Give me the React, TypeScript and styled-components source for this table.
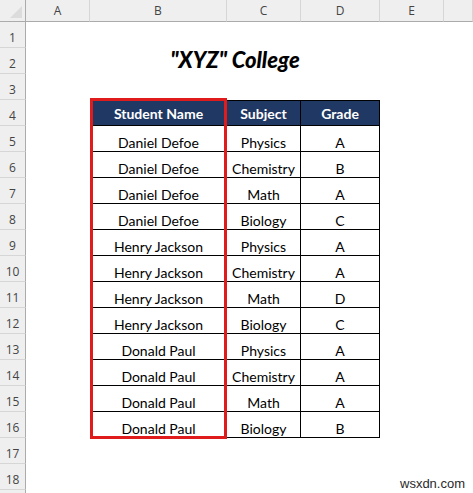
import React from "react";
import styled, { createGlobalStyle } from "styled-components";

const Global = createGlobalStyle`
  html, body { margin: 0; padding: 0; background: #ffffff; overflow: hidden; }
  body { font-family: "Lato", "Open Sans", sans-serif; }
`;

const COLS = ["A", "B", "C", "D", "E", ""];
const ROW_COUNT = 19;

const rows: [string, string, string][] = [
  ["Daniel Defoe", "Physics", "A"],
  ["Daniel Defoe", "Chemistry", "B"],
  ["Daniel Defoe", "Math", "A"],
  ["Daniel Defoe", "Biology", "C"],
  ["Henry Jackson", "Physics", "A"],
  ["Henry Jackson", "Chemistry", "A"],
  ["Henry Jackson", "Math", "D"],
  ["Henry Jackson", "Biology", "C"],
  ["Donald Paul", "Physics", "A"],
  ["Donald Paul", "Chemistry", "A"],
  ["Donald Paul", "Math", "A"],
  ["Donald Paul", "Biology", "B"],
];

const Page = styled.div`
  position: relative;
  width: 473px;
  height: 493px;
  overflow: hidden;
  background: #ffffff;
`;

const Sheet = styled.div`
  display: grid;
  grid-template-columns: 26px 64px 137px 74px 79px 64px 1fr;
  grid-template-rows: 22px repeat(${ROW_COUNT}, 26px);
`;

const Corner = styled.div`
  grid-column: 1;
  grid-row: 1;
  background: #efefef;
  border-right: 1px solid #ababab;
  border-bottom: 1px solid #ababab;
  box-sizing: border-box;
  position: relative;
  &::after {
    content: "";
    position: absolute;
    right: 3px;
    bottom: 3px;
    width: 0;
    height: 0;
    border-left: 12px solid transparent;
    border-bottom: 12px solid #dcdcdc;
  }
`;

const ColHead = styled.div<{ $col: number }>`
  grid-column: ${(p) => p.$col};
  grid-row: 1;
  background: #efefef;
  border-bottom: 1px solid #ababab;
  border-right: 1px solid #d6d6d6;
  box-sizing: border-box;
  display: flex;
  align-items: center;
  justify-content: center;
  font-family: "Open Sans", "Noto Sans", sans-serif;
  font-size: 12px;
  color: #444444;
  &:last-child { border-right: none; }
`;

const RowHead = styled.div<{ $row: number }>`
  grid-column: 1;
  grid-row: ${(p) => p.$row};
  background: #efefef;
  border-right: 1px solid #ababab;
  border-bottom: 1px solid #d6d6d6;
  box-sizing: border-box;
  display: flex;
  align-items: center;
  justify-content: center;
  padding-top: 6px;
  font-family: "Open Sans", "Noto Sans", sans-serif;
  font-size: 12px;
  color: #444444;
`;

const Title = styled.div`
  grid-column: 3 / span 3;
  grid-row: 3;
  display: flex;
  align-items: center;
  justify-content: center;
  font-family: "Lato", "Open Sans", sans-serif;
  font-weight: 900;
  font-style: italic;
  font-size: 22px;
  color: #000000;
  padding-bottom: 3px;
`;

const Cell = styled.div<{ $col: number; $row: number; $head?: boolean }>`
  grid-column: ${(p) => p.$col};
  grid-row: ${(p) => p.$row};
  box-sizing: border-box;
  border-right: 1px solid #000000;
  border-bottom: 1px solid #000000;
  ${(p) => (p.$col === 3 ? "border-left: 1px solid #000000;" : "")}
  ${(p) => (p.$head ? "border-top: 1px solid #000000;" : "")}
  background: ${(p) => (p.$head ? "#203864" : "#ffffff")};
  color: ${(p) => (p.$head ? "#ffffff" : "#000000")};
  font-weight: ${(p) => (p.$head ? 700 : 400)};
  font-family: "Lato", "Open Sans", sans-serif;
  font-size: 14px;
  display: flex;
  align-items: center;
  justify-content: center;
  padding-top: ${(p) => (p.$head ? "1px" : "7px")};
`;

const Highlight = styled.div`
  position: absolute;
  left: 90px;
  top: 98px;
  width: 137px;
  height: 341px;
  border: 3px solid #e01b1b;
  box-sizing: border-box;
  pointer-events: none;
`;

const Watermark = styled.div`
  position: absolute;
  left: 400px;
  top: 476px;
  font-family: "Liberation Sans", "DejaVu Sans", sans-serif;
  font-size: 13px;
  line-height: 15px;
  color: #2a2a2a;
  white-space: nowrap;
`;

export default function App() {
  return (
    <Page>
      <Global />
      <Sheet>
        <Corner />
        {COLS.map((c, i) => (
          <ColHead key={i} $col={i + 2}>
            {c}
          </ColHead>
        ))}
        {Array.from({ length: ROW_COUNT }, (_, i) => (
          <RowHead key={i} $row={i + 2}>
            {i < ROW_COUNT - 1 ? i + 1 : ""}
          </RowHead>
        ))}
        <Title>"XYZ" College</Title>
        <Cell $col={3} $row={5} $head>Student Name</Cell>
        <Cell $col={4} $row={5} $head>Subject</Cell>
        <Cell $col={5} $row={5} $head>Grade</Cell>
        {rows.map((r, i) => (
          <React.Fragment key={i}>
            <Cell $col={3} $row={i + 6}>{r[0]}</Cell>
            <Cell $col={4} $row={i + 6}>{r[1]}</Cell>
            <Cell $col={5} $row={i + 6}>{r[2]}</Cell>
          </React.Fragment>
        ))}
      </Sheet>
      <Highlight />
      <Watermark>wsxdn.com</Watermark>
    </Page>
  );
}
